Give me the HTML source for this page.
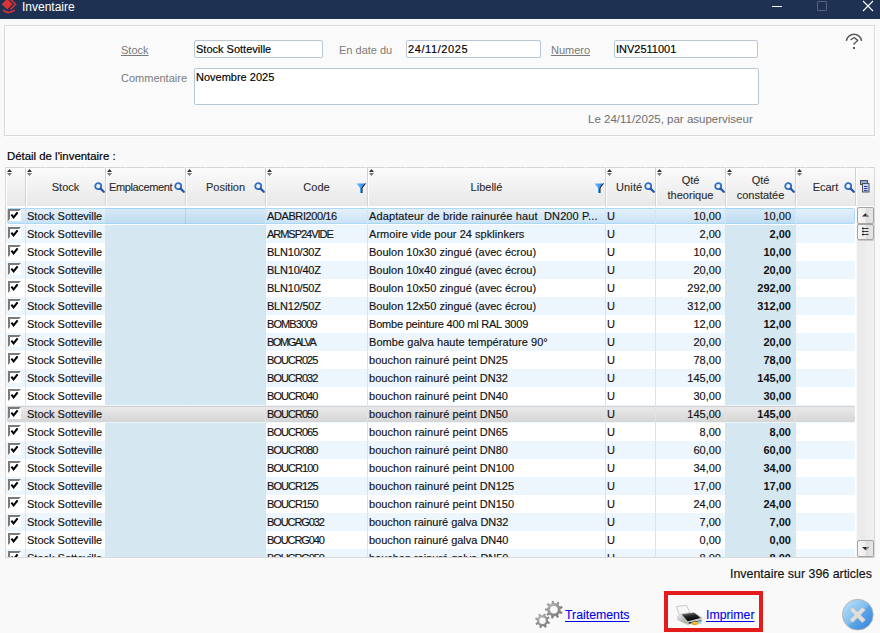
<!DOCTYPE html><html><head><meta charset="utf-8"><style>*{margin:0;padding:0;box-sizing:border-box}
html,body{width:880px;height:633px;overflow:hidden;background:#f9f9f9;font-family:"Liberation Sans",sans-serif;font-size:11px;position:relative}
.t{position:absolute;white-space:nowrap;line-height:13px}
.ic{position:absolute;display:block}
#title{position:absolute;left:0;top:0;width:880px;height:19px;background:#1f3152}
#panel{position:absolute;left:4px;top:25px;width:871px;height:111px;border:1px solid #d9d9d9;background:#fafafa;box-shadow:1px 1px 0 #fff,inset 1px 1px 0 #fff}
.lbl{color:#7a7a7a}
.u{text-decoration:underline;text-underline-offset:1px}
.inp{position:absolute;border:1px solid #b8c7d6;border-radius:2px;background:#fff}
.inp span{position:absolute;left:1px;top:2px;color:#000;line-height:13px;white-space:nowrap;-webkit-text-stroke:0.15px #000}
#tbl{position:absolute;left:5px;top:167px;width:870px;height:391px;border:1px solid #d9d9d9;background:#fff}
.hc{position:absolute;top:168px;height:38px;background:linear-gradient(#fbfbfb,#e8e8e8);border-right:1px solid #d2d2d2;box-shadow:inset 1px 0 0 #fff}
.hdt{text-align:center;color:#2a2a2a;-webkit-text-stroke:0.1px #2a2a2a}
#rows{position:absolute;left:6px;top:207px;width:849px;height:350px;overflow:hidden}
.row{position:absolute;left:0;width:849px;height:18px}
.row.even{background:#fff}
.row.odd{background:#eef6fd}
.row .bl{position:absolute;top:0;height:18px;background:#d5e8f2}
.row .sp{position:absolute;top:0;width:1px;height:18px;background:#e1e1e1}
.selbox{position:absolute;left:1px;top:1px;width:848px;height:16px;background:linear-gradient(#e4f0fa,#c9e2f5);border:1px solid #a9d9f5;border-radius:2px}
.row.first{background:transparent}
.hovbox{position:absolute;left:1px;top:1px;width:848px;height:16px;background:linear-gradient(#e9e9e9,#d5d5d5);border-top:1px solid #cfcfcf;border-radius:2px}
.cb{position:absolute;left:2px;top:2px;width:13px;height:12px;background:#fff}
.cb svg{display:block}
.c{top:3px;color:#111;-webkit-text-stroke:0.15px #111}
.r{text-align:right}
.b{font-weight:bold;-webkit-text-stroke:0 #111}
#sbar{position:absolute;left:856px;top:207px;width:18px;height:350px;background:linear-gradient(90deg,#f9f9f9 0,#f9f9f9 1px,#ebebeb 1px,#ebebeb 10px,#efefef 10px)}
.sbtn{position:absolute;left:857px;width:17px;border:1px solid #a4a4a4;border-radius:2px;background:linear-gradient(90deg,#f6f6f6 0%,#ececec 50%,#dcdcdc 54%,#e6e6e6 100%);box-shadow:0 1px 0 #c8c8c8}
.sbtn svg{position:absolute;left:-1px;top:-1px}
.lnk{color:#0000f0;text-decoration:underline;text-underline-offset:2px;text-decoration-skip-ink:none;font-size:12.3px;-webkit-text-stroke:0.1px #0000f0}
#redbox{position:absolute;left:664px;top:591px;width:99px;height:41px;border:4px solid #e31b1b}
</style></head><body>
<div id="title"></div>
<svg class="ic" style="left:0px;top:0px" width="17" height="14" viewBox="0 0 17 14"><path d="M1.8 4.2 L7.2 -1.2 L12.4 4.2 L7.2 9.6 Z" fill="#e03236"/><path d="M10.8 -0.4 L15.6 4.2 L10.4 9.6" fill="none" stroke="#e03236" stroke-width="1.5"/><path d="M2.8 10.2 Q8.5 14.8 14.8 10.2" fill="none" stroke="#e03236" stroke-width="1.6"/></svg>
<div class="t" style="left:22px;top:0px;color:#fff;font-size:12px;line-height:14px">Inventaire</div>
<div style="position:absolute;left:772px;top:6px;width:10px;height:1px;background:#fff"></div>
<div style="position:absolute;left:817px;top:1px;width:10px;height:10px;border:1px solid #56647c;border-radius:1px"></div>
<svg class="ic" style="left:862px;top:0px" width="12" height="12" viewBox="0 0 12 12"><path d="M1 1 L11 11 M11 1 L1 11" stroke="#fff" stroke-width="1.1"/></svg>
<div id="panel"></div>
<div class="t lbl u" style="left:121px;top:44px">Stock</div>
<div class="inp" style="left:194px;top:40px;width:129px;height:18px"><span>Stock Sotteville</span></div>
<div class="t lbl" style="left:339px;top:44px">En date du</div>
<div class="inp" style="left:406px;top:40px;width:135px;height:18px"><span style="letter-spacing:0.6px">24/11/2025</span></div>
<div class="t lbl u" style="left:551px;top:44px">Numero</div>
<div class="inp" style="left:614px;top:40px;width:144px;height:18px"><span>INV2511001</span></div>
<div class="t lbl" style="left:121px;top:72px">Commentaire</div>
<div class="inp" style="left:194px;top:68px;width:565px;height:37px"><span>Novembre 2025</span></div>
<div class="t lbl" style="left:588px;top:113px;color:#6f6f6f;font-size:11.5px">Le 24/11/2025, par asuperviseur</div>
<svg class="ic" style="left:845px;top:32px" width="18" height="18" viewBox="0 0 18 18"><circle cx="9" cy="9.3" r="7.6" fill="#fff"/><path d="M1.4 8.8 A7.7 7.7 0 0 1 16.6 8.8" fill="none" stroke="#5a5a5a" stroke-width="1.5"/><path d="M5.4 8 L9.2 5.5 L12.7 8.4 L8.5 12.6" fill="none" stroke="#555" stroke-width="1.4"/><rect x="8" y="15" width="2" height="2" fill="#555"/></svg>
<div class="t" style="left:7px;top:150px;color:#000;font-size:11.4px;-webkit-text-stroke:0.2px #000">Détail de l'inventaire :</div>
<div id="tbl"></div>
<div style="position:absolute;left:6px;top:167px;width:868px;height:1px;background:repeating-linear-gradient(90deg,#d6d6d6 0,#d6d6d6 19px,#f4f4f4 19px,#f4f4f4 20px)"></div>
<div class="hc" style="left:6px;width:20px"></div>
<div class="hc" style="left:26px;width:80px"></div>
<div class="hc" style="left:106px;width:80px"></div>
<div class="hc" style="left:186px;width:80px"></div>
<div class="hc" style="left:266px;width:102px"></div>
<div class="hc" style="left:368px;width:238px"></div>
<div class="hc" style="left:606px;width:50px"></div>
<div class="hc" style="left:656px;width:70px"></div>
<div class="hc" style="left:726px;width:70px"></div>
<div class="hc" style="left:796px;width:60px"></div>
<div class="hc" style="left:856px;width:18px;border-right:none"></div>
<svg class="ic" style="left:7px;top:169px" width="5" height="8" viewBox="0 0 5 8"><path d="M0 3 L2.5 0 L5 3Z" fill="#333"/><path d="M0 4 L2.5 7 L5 4Z" fill="#777"/></svg>
<svg class="ic" style="left:27px;top:169px" width="5" height="8" viewBox="0 0 5 8"><path d="M0 3 L2.5 0 L5 3Z" fill="#333"/><path d="M0 4 L2.5 7 L5 4Z" fill="#777"/></svg>
<svg class="ic" style="left:107px;top:169px" width="5" height="8" viewBox="0 0 5 8"><path d="M0 3 L2.5 0 L5 3Z" fill="#333"/><path d="M0 4 L2.5 7 L5 4Z" fill="#777"/></svg>
<svg class="ic" style="left:187px;top:169px" width="5" height="8" viewBox="0 0 5 8"><path d="M0 3 L2.5 0 L5 3Z" fill="#333"/><path d="M0 4 L2.5 7 L5 4Z" fill="#777"/></svg>
<svg class="ic" style="left:267px;top:169px" width="5" height="8" viewBox="0 0 5 8"><path d="M0 3 L2.5 0 L5 3Z" fill="#333"/><path d="M0 4 L2.5 7 L5 4Z" fill="#777"/></svg>
<svg class="ic" style="left:369px;top:169px" width="5" height="8" viewBox="0 0 5 8"><path d="M0 3 L2.5 0 L5 3Z" fill="#333"/><path d="M0 4 L2.5 7 L5 4Z" fill="#777"/></svg>
<svg class="ic" style="left:607px;top:169px" width="5" height="8" viewBox="0 0 5 8"><path d="M0 3 L2.5 0 L5 3Z" fill="#333"/><path d="M0 4 L2.5 7 L5 4Z" fill="#777"/></svg>
<svg class="ic" style="left:657px;top:169px" width="5" height="8" viewBox="0 0 5 8"><path d="M0 3 L2.5 0 L5 3Z" fill="#333"/><path d="M0 4 L2.5 7 L5 4Z" fill="#777"/></svg>
<svg class="ic" style="left:727px;top:169px" width="5" height="8" viewBox="0 0 5 8"><path d="M0 3 L2.5 0 L5 3Z" fill="#333"/><path d="M0 4 L2.5 7 L5 4Z" fill="#777"/></svg>
<svg class="ic" style="left:797px;top:169px" width="5" height="8" viewBox="0 0 5 8"><path d="M0 3 L2.5 0 L5 3Z" fill="#333"/><path d="M0 4 L2.5 7 L5 4Z" fill="#777"/></svg>
<div class="t hdt" style="left:26px;width:79px;top:180px;line-height:15px">Stock</div>
<svg class="ic" style="left:94px;top:182px" width="11" height="11" viewBox="0 0 11 11"><circle cx="4.2" cy="4.2" r="3" fill="none" stroke="#2d6fc4" stroke-width="1.8"/><path d="M6.6 6.6 L9.8 9.8" stroke="#2456a8" stroke-width="2.2" stroke-linecap="round"/></svg>
<div class="t hdt" style="left:109px;text-align:left;top:180px;line-height:15px;letter-spacing:-0.370px;">Emplacement</div>
<svg class="ic" style="left:174px;top:182px" width="11" height="11" viewBox="0 0 11 11"><circle cx="4.2" cy="4.2" r="3" fill="none" stroke="#2d6fc4" stroke-width="1.8"/><path d="M6.6 6.6 L9.8 9.8" stroke="#2456a8" stroke-width="2.2" stroke-linecap="round"/></svg>
<div class="t hdt" style="left:186px;width:79px;top:180px;line-height:15px">Position</div>
<svg class="ic" style="left:254px;top:182px" width="11" height="11" viewBox="0 0 11 11"><circle cx="4.2" cy="4.2" r="3" fill="none" stroke="#2d6fc4" stroke-width="1.8"/><path d="M6.6 6.6 L9.8 9.8" stroke="#2456a8" stroke-width="2.2" stroke-linecap="round"/></svg>
<div class="t hdt" style="left:266px;width:101px;top:180px;line-height:15px">Code</div>
<svg class="ic" style="left:356px;top:183px" width="11" height="11" viewBox="0 0 11 11"><defs><linearGradient id="fg" x1="0" x2="1"><stop offset="0" stop-color="#6cc8ff"/><stop offset="1" stop-color="#1b6fe0"/></linearGradient></defs><path d="M0.5 0.5 H9.5 L6 5 V10 L4 10 V5 Z" fill="url(#fg)"/><path d="M9.5 0.5 L6 5 V10" fill="none" stroke="#111" stroke-width="1"/></svg>
<div class="t hdt" style="left:368px;width:237px;top:180px;line-height:15px">Libellé</div>
<svg class="ic" style="left:594px;top:183px" width="11" height="11" viewBox="0 0 11 11"><defs><linearGradient id="fg" x1="0" x2="1"><stop offset="0" stop-color="#6cc8ff"/><stop offset="1" stop-color="#1b6fe0"/></linearGradient></defs><path d="M0.5 0.5 H9.5 L6 5 V10 L4 10 V5 Z" fill="url(#fg)"/><path d="M9.5 0.5 L6 5 V10" fill="none" stroke="#111" stroke-width="1"/></svg>
<div class="t hdt" style="left:616px;text-align:left;top:180px;line-height:15px;letter-spacing:0.125px;">Unité</div>
<svg class="ic" style="left:644px;top:182px" width="11" height="11" viewBox="0 0 11 11"><circle cx="4.2" cy="4.2" r="3" fill="none" stroke="#2d6fc4" stroke-width="1.8"/><path d="M6.6 6.6 L9.8 9.8" stroke="#2456a8" stroke-width="2.2" stroke-linecap="round"/></svg>
<div class="t hdt" style="left:656px;width:69px;top:173px;line-height:15px">Qté<br>theorique</div>
<svg class="ic" style="left:714px;top:182px" width="11" height="11" viewBox="0 0 11 11"><circle cx="4.2" cy="4.2" r="3" fill="none" stroke="#2d6fc4" stroke-width="1.8"/><path d="M6.6 6.6 L9.8 9.8" stroke="#2456a8" stroke-width="2.2" stroke-linecap="round"/></svg>
<div class="t hdt" style="left:726px;width:69px;top:173px;line-height:15px">Qté<br>constatée</div>
<svg class="ic" style="left:784px;top:182px" width="11" height="11" viewBox="0 0 11 11"><circle cx="4.2" cy="4.2" r="3" fill="none" stroke="#2d6fc4" stroke-width="1.8"/><path d="M6.6 6.6 L9.8 9.8" stroke="#2456a8" stroke-width="2.2" stroke-linecap="round"/></svg>
<div class="t hdt" style="left:796px;width:59px;top:180px;line-height:15px">Ecart</div>
<svg class="ic" style="left:844px;top:182px" width="11" height="11" viewBox="0 0 11 11"><circle cx="4.2" cy="4.2" r="3" fill="none" stroke="#2d6fc4" stroke-width="1.8"/><path d="M6.6 6.6 L9.8 9.8" stroke="#2456a8" stroke-width="2.2" stroke-linecap="round"/></svg>
<div id="rows">
<div class="row even first" style="top:0px">
<div class="selbox"></div>
<div class="bl" style="left:99px;top:1px;height:16px;width:160px;background:rgba(120,180,220,0.12)"></div>
<div class="bl" style="left:719px;top:1px;height:16px;width:70px;background:rgba(120,180,220,0.12)"></div>
<div class="sp" style="left:179px;top:1px;height:16px;background:rgba(150,170,185,0.35)"></div>
<div class="sp" style="left:19px"></div>
<div class="sp" style="left:259px"></div>
<div class="sp" style="left:361px"></div>
<div class="sp" style="left:599px"></div>
<div class="sp" style="left:649px"></div>
<div class="sp" style="left:719px"></div>
<div class="sp" style="left:789px"></div>
<div class="cb"><svg width="13" height="12" viewBox="0 0 13 12"><path d="M0 0 H13 L11 2 H2 V10 L0 12 Z" fill="#7a7a7a"/><path d="M3.4 5.6 L5.6 8.4 L9.6 3.4" fill="none" stroke="#000" stroke-width="2.1"/></svg></div>
<div class="t c" style="left:21px">Stock Sotteville</div>
<div class="t c" style="left:261px;letter-spacing:-0.400px;">ADABRI200/16</div>
<div class="t c" style="left:363px;letter-spacing:0.125px;">Adaptateur de bride rainurée haut&nbsp; DN200 P...</div>
<div class="t c" style="left:601px">U</div>
<div class="t c r" style="left:646px;width:69px">10,00</div>
<div class="t c r" style="left:716px;width:69px">10,00</div>
</div>
<div class="row odd" style="top:18px">
<div class="bl" style="left:99px;width:160px"></div>
<div class="bl" style="left:719px;width:70px"></div>
<div class="sp" style="left:179px;background:#dde3e6"></div>
<div class="sp" style="left:19px"></div>
<div class="sp" style="left:259px"></div>
<div class="sp" style="left:361px"></div>
<div class="sp" style="left:599px"></div>
<div class="sp" style="left:649px"></div>
<div class="sp" style="left:719px"></div>
<div class="sp" style="left:789px"></div>
<div class="cb"><svg width="13" height="12" viewBox="0 0 13 12"><path d="M0 0 H13 L11 2 H2 V10 L0 12 Z" fill="#7a7a7a"/><path d="M3.4 5.6 L5.6 8.4 L9.6 3.4" fill="none" stroke="#000" stroke-width="2.1"/></svg></div>
<div class="t c" style="left:21px">Stock Sotteville</div>
<div class="t c" style="left:261px;letter-spacing:-1.030px;">ARMSP24VIDE</div>
<div class="t c" style="left:363px;letter-spacing:0.043px;">Armoire vide pour 24 spklinkers</div>
<div class="t c" style="left:601px">U</div>
<div class="t c r" style="left:646px;width:69px">2,00</div>
<div class="t c r b" style="left:716px;width:69px">2,00</div>
</div>
<div class="row even" style="top:36px">
<div class="bl" style="left:99px;width:160px"></div>
<div class="bl" style="left:719px;width:70px"></div>
<div class="sp" style="left:179px;background:#dde3e6"></div>
<div class="sp" style="left:19px"></div>
<div class="sp" style="left:259px"></div>
<div class="sp" style="left:361px"></div>
<div class="sp" style="left:599px"></div>
<div class="sp" style="left:649px"></div>
<div class="sp" style="left:719px"></div>
<div class="sp" style="left:789px"></div>
<div class="cb"><svg width="13" height="12" viewBox="0 0 13 12"><path d="M0 0 H13 L11 2 H2 V10 L0 12 Z" fill="#7a7a7a"/><path d="M3.4 5.6 L5.6 8.4 L9.6 3.4" fill="none" stroke="#000" stroke-width="2.1"/></svg></div>
<div class="t c" style="left:21px">Stock Sotteville</div>
<div class="t c" style="left:261px;letter-spacing:-0.213px;">BLN10/30Z</div>
<div class="t c" style="left:363px;letter-spacing:0.006px;">Boulon 10x30 zingué (avec écrou)</div>
<div class="t c" style="left:601px">U</div>
<div class="t c r" style="left:646px;width:69px">10,00</div>
<div class="t c r b" style="left:716px;width:69px">10,00</div>
</div>
<div class="row odd" style="top:54px">
<div class="bl" style="left:99px;width:160px"></div>
<div class="bl" style="left:719px;width:70px"></div>
<div class="sp" style="left:179px;background:#dde3e6"></div>
<div class="sp" style="left:19px"></div>
<div class="sp" style="left:259px"></div>
<div class="sp" style="left:361px"></div>
<div class="sp" style="left:599px"></div>
<div class="sp" style="left:649px"></div>
<div class="sp" style="left:719px"></div>
<div class="sp" style="left:789px"></div>
<div class="cb"><svg width="13" height="12" viewBox="0 0 13 12"><path d="M0 0 H13 L11 2 H2 V10 L0 12 Z" fill="#7a7a7a"/><path d="M3.4 5.6 L5.6 8.4 L9.6 3.4" fill="none" stroke="#000" stroke-width="2.1"/></svg></div>
<div class="t c" style="left:21px">Stock Sotteville</div>
<div class="t c" style="left:261px;letter-spacing:-0.213px;">BLN10/40Z</div>
<div class="t c" style="left:363px;letter-spacing:0.006px;">Boulon 10x40 zingué (avec écrou)</div>
<div class="t c" style="left:601px">U</div>
<div class="t c r" style="left:646px;width:69px">20,00</div>
<div class="t c r b" style="left:716px;width:69px">20,00</div>
</div>
<div class="row even" style="top:72px">
<div class="bl" style="left:99px;width:160px"></div>
<div class="bl" style="left:719px;width:70px"></div>
<div class="sp" style="left:179px;background:#dde3e6"></div>
<div class="sp" style="left:19px"></div>
<div class="sp" style="left:259px"></div>
<div class="sp" style="left:361px"></div>
<div class="sp" style="left:599px"></div>
<div class="sp" style="left:649px"></div>
<div class="sp" style="left:719px"></div>
<div class="sp" style="left:789px"></div>
<div class="cb"><svg width="13" height="12" viewBox="0 0 13 12"><path d="M0 0 H13 L11 2 H2 V10 L0 12 Z" fill="#7a7a7a"/><path d="M3.4 5.6 L5.6 8.4 L9.6 3.4" fill="none" stroke="#000" stroke-width="2.1"/></svg></div>
<div class="t c" style="left:21px">Stock Sotteville</div>
<div class="t c" style="left:261px;letter-spacing:-0.213px;">BLN10/50Z</div>
<div class="t c" style="left:363px;letter-spacing:0.006px;">Boulon 10x50 zingué (avec écrou)</div>
<div class="t c" style="left:601px">U</div>
<div class="t c r" style="left:646px;width:69px">292,00</div>
<div class="t c r b" style="left:716px;width:69px">292,00</div>
</div>
<div class="row odd" style="top:90px">
<div class="bl" style="left:99px;width:160px"></div>
<div class="bl" style="left:719px;width:70px"></div>
<div class="sp" style="left:179px;background:#dde3e6"></div>
<div class="sp" style="left:19px"></div>
<div class="sp" style="left:259px"></div>
<div class="sp" style="left:361px"></div>
<div class="sp" style="left:599px"></div>
<div class="sp" style="left:649px"></div>
<div class="sp" style="left:719px"></div>
<div class="sp" style="left:789px"></div>
<div class="cb"><svg width="13" height="12" viewBox="0 0 13 12"><path d="M0 0 H13 L11 2 H2 V10 L0 12 Z" fill="#7a7a7a"/><path d="M3.4 5.6 L5.6 8.4 L9.6 3.4" fill="none" stroke="#000" stroke-width="2.1"/></svg></div>
<div class="t c" style="left:21px">Stock Sotteville</div>
<div class="t c" style="left:261px;letter-spacing:-0.213px;">BLN12/50Z</div>
<div class="t c" style="left:363px;letter-spacing:0.006px;">Boulon 12x50 zingué (avec écrou)</div>
<div class="t c" style="left:601px">U</div>
<div class="t c r" style="left:646px;width:69px">312,00</div>
<div class="t c r b" style="left:716px;width:69px">312,00</div>
</div>
<div class="row even" style="top:108px">
<div class="bl" style="left:99px;width:160px"></div>
<div class="bl" style="left:719px;width:70px"></div>
<div class="sp" style="left:179px;background:#dde3e6"></div>
<div class="sp" style="left:19px"></div>
<div class="sp" style="left:259px"></div>
<div class="sp" style="left:361px"></div>
<div class="sp" style="left:599px"></div>
<div class="sp" style="left:649px"></div>
<div class="sp" style="left:719px"></div>
<div class="sp" style="left:789px"></div>
<div class="cb"><svg width="13" height="12" viewBox="0 0 13 12"><path d="M0 0 H13 L11 2 H2 V10 L0 12 Z" fill="#7a7a7a"/><path d="M3.4 5.6 L5.6 8.4 L9.6 3.4" fill="none" stroke="#000" stroke-width="2.1"/></svg></div>
<div class="t c" style="left:21px">Stock Sotteville</div>
<div class="t c" style="left:261px;letter-spacing:-0.900px;">BOMB3009</div>
<div class="t c" style="left:363px;letter-spacing:-0.207px;">Bombe peinture 400 ml RAL 3009</div>
<div class="t c" style="left:601px">U</div>
<div class="t c r" style="left:646px;width:69px">12,00</div>
<div class="t c r b" style="left:716px;width:69px">12,00</div>
</div>
<div class="row odd" style="top:126px">
<div class="bl" style="left:99px;width:160px"></div>
<div class="bl" style="left:719px;width:70px"></div>
<div class="sp" style="left:179px;background:#dde3e6"></div>
<div class="sp" style="left:19px"></div>
<div class="sp" style="left:259px"></div>
<div class="sp" style="left:361px"></div>
<div class="sp" style="left:599px"></div>
<div class="sp" style="left:649px"></div>
<div class="sp" style="left:719px"></div>
<div class="sp" style="left:789px"></div>
<div class="cb"><svg width="13" height="12" viewBox="0 0 13 12"><path d="M0 0 H13 L11 2 H2 V10 L0 12 Z" fill="#7a7a7a"/><path d="M3.4 5.6 L5.6 8.4 L9.6 3.4" fill="none" stroke="#000" stroke-width="2.1"/></svg></div>
<div class="t c" style="left:21px">Stock Sotteville</div>
<div class="t c" style="left:261px;letter-spacing:-1.471px;">BOMGALVA</div>
<div class="t c" style="left:363px;letter-spacing:0.059px;">Bombe galva haute température 90°</div>
<div class="t c" style="left:601px">U</div>
<div class="t c r" style="left:646px;width:69px">20,00</div>
<div class="t c r b" style="left:716px;width:69px">20,00</div>
</div>
<div class="row even" style="top:144px">
<div class="bl" style="left:99px;width:160px"></div>
<div class="bl" style="left:719px;width:70px"></div>
<div class="sp" style="left:179px;background:#dde3e6"></div>
<div class="sp" style="left:19px"></div>
<div class="sp" style="left:259px"></div>
<div class="sp" style="left:361px"></div>
<div class="sp" style="left:599px"></div>
<div class="sp" style="left:649px"></div>
<div class="sp" style="left:719px"></div>
<div class="sp" style="left:789px"></div>
<div class="cb"><svg width="13" height="12" viewBox="0 0 13 12"><path d="M0 0 H13 L11 2 H2 V10 L0 12 Z" fill="#7a7a7a"/><path d="M3.4 5.6 L5.6 8.4 L9.6 3.4" fill="none" stroke="#000" stroke-width="2.1"/></svg></div>
<div class="t c" style="left:21px">Stock Sotteville</div>
<div class="t c" style="left:261px;letter-spacing:-0.957px;">BOUCR025</div>
<div class="t c" style="left:363px;letter-spacing:0.056px;">bouchon rainuré peint DN25</div>
<div class="t c" style="left:601px">U</div>
<div class="t c r" style="left:646px;width:69px">78,00</div>
<div class="t c r b" style="left:716px;width:69px">78,00</div>
</div>
<div class="row odd" style="top:162px">
<div class="bl" style="left:99px;width:160px"></div>
<div class="bl" style="left:719px;width:70px"></div>
<div class="sp" style="left:179px;background:#dde3e6"></div>
<div class="sp" style="left:19px"></div>
<div class="sp" style="left:259px"></div>
<div class="sp" style="left:361px"></div>
<div class="sp" style="left:599px"></div>
<div class="sp" style="left:649px"></div>
<div class="sp" style="left:719px"></div>
<div class="sp" style="left:789px"></div>
<div class="cb"><svg width="13" height="12" viewBox="0 0 13 12"><path d="M0 0 H13 L11 2 H2 V10 L0 12 Z" fill="#7a7a7a"/><path d="M3.4 5.6 L5.6 8.4 L9.6 3.4" fill="none" stroke="#000" stroke-width="2.1"/></svg></div>
<div class="t c" style="left:21px">Stock Sotteville</div>
<div class="t c" style="left:261px;letter-spacing:-0.957px;">BOUCR032</div>
<div class="t c" style="left:363px;letter-spacing:0.056px;">bouchon rainuré peint DN32</div>
<div class="t c" style="left:601px">U</div>
<div class="t c r" style="left:646px;width:69px">145,00</div>
<div class="t c r b" style="left:716px;width:69px">145,00</div>
</div>
<div class="row even" style="top:180px">
<div class="bl" style="left:99px;width:160px"></div>
<div class="bl" style="left:719px;width:70px"></div>
<div class="sp" style="left:179px;background:#dde3e6"></div>
<div class="sp" style="left:19px"></div>
<div class="sp" style="left:259px"></div>
<div class="sp" style="left:361px"></div>
<div class="sp" style="left:599px"></div>
<div class="sp" style="left:649px"></div>
<div class="sp" style="left:719px"></div>
<div class="sp" style="left:789px"></div>
<div class="cb"><svg width="13" height="12" viewBox="0 0 13 12"><path d="M0 0 H13 L11 2 H2 V10 L0 12 Z" fill="#7a7a7a"/><path d="M3.4 5.6 L5.6 8.4 L9.6 3.4" fill="none" stroke="#000" stroke-width="2.1"/></svg></div>
<div class="t c" style="left:21px">Stock Sotteville</div>
<div class="t c" style="left:261px;letter-spacing:-0.957px;">BOUCR040</div>
<div class="t c" style="left:363px;letter-spacing:0.056px;">bouchon rainuré peint DN40</div>
<div class="t c" style="left:601px">U</div>
<div class="t c r" style="left:646px;width:69px">30,00</div>
<div class="t c r b" style="left:716px;width:69px">30,00</div>
</div>
<div class="row odd" style="top:198px">
<div class="hovbox"></div>
<div class="sp" style="left:19px"></div>
<div class="sp" style="left:259px"></div>
<div class="sp" style="left:361px"></div>
<div class="sp" style="left:599px"></div>
<div class="sp" style="left:649px"></div>
<div class="sp" style="left:719px"></div>
<div class="sp" style="left:789px"></div>
<div class="cb"><svg width="13" height="12" viewBox="0 0 13 12"><path d="M0 0 H13 L11 2 H2 V10 L0 12 Z" fill="#7a7a7a"/><path d="M3.4 5.6 L5.6 8.4 L9.6 3.4" fill="none" stroke="#000" stroke-width="2.1"/></svg></div>
<div class="t c" style="left:21px">Stock Sotteville</div>
<div class="t c" style="left:261px;letter-spacing:-0.957px;">BOUCR050</div>
<div class="t c" style="left:363px;letter-spacing:0.056px;">bouchon rainuré peint DN50</div>
<div class="t c" style="left:601px">U</div>
<div class="t c r" style="left:646px;width:69px">145,00</div>
<div class="t c r b" style="left:716px;width:69px">145,00</div>
</div>
<div class="row even" style="top:216px">
<div class="bl" style="left:99px;width:160px"></div>
<div class="bl" style="left:719px;width:70px"></div>
<div class="sp" style="left:179px;background:#dde3e6"></div>
<div class="sp" style="left:19px"></div>
<div class="sp" style="left:259px"></div>
<div class="sp" style="left:361px"></div>
<div class="sp" style="left:599px"></div>
<div class="sp" style="left:649px"></div>
<div class="sp" style="left:719px"></div>
<div class="sp" style="left:789px"></div>
<div class="cb"><svg width="13" height="12" viewBox="0 0 13 12"><path d="M0 0 H13 L11 2 H2 V10 L0 12 Z" fill="#7a7a7a"/><path d="M3.4 5.6 L5.6 8.4 L9.6 3.4" fill="none" stroke="#000" stroke-width="2.1"/></svg></div>
<div class="t c" style="left:21px">Stock Sotteville</div>
<div class="t c" style="left:261px;letter-spacing:-0.957px;">BOUCR065</div>
<div class="t c" style="left:363px;letter-spacing:0.056px;">bouchon rainuré peint DN65</div>
<div class="t c" style="left:601px">U</div>
<div class="t c r" style="left:646px;width:69px">8,00</div>
<div class="t c r b" style="left:716px;width:69px">8,00</div>
</div>
<div class="row odd" style="top:234px">
<div class="bl" style="left:99px;width:160px"></div>
<div class="bl" style="left:719px;width:70px"></div>
<div class="sp" style="left:179px;background:#dde3e6"></div>
<div class="sp" style="left:19px"></div>
<div class="sp" style="left:259px"></div>
<div class="sp" style="left:361px"></div>
<div class="sp" style="left:599px"></div>
<div class="sp" style="left:649px"></div>
<div class="sp" style="left:719px"></div>
<div class="sp" style="left:789px"></div>
<div class="cb"><svg width="13" height="12" viewBox="0 0 13 12"><path d="M0 0 H13 L11 2 H2 V10 L0 12 Z" fill="#7a7a7a"/><path d="M3.4 5.6 L5.6 8.4 L9.6 3.4" fill="none" stroke="#000" stroke-width="2.1"/></svg></div>
<div class="t c" style="left:21px">Stock Sotteville</div>
<div class="t c" style="left:261px;letter-spacing:-0.957px;">BOUCR080</div>
<div class="t c" style="left:363px;letter-spacing:0.056px;">bouchon rainuré peint DN80</div>
<div class="t c" style="left:601px">U</div>
<div class="t c r" style="left:646px;width:69px">60,00</div>
<div class="t c r b" style="left:716px;width:69px">60,00</div>
</div>
<div class="row even" style="top:252px">
<div class="bl" style="left:99px;width:160px"></div>
<div class="bl" style="left:719px;width:70px"></div>
<div class="sp" style="left:179px;background:#dde3e6"></div>
<div class="sp" style="left:19px"></div>
<div class="sp" style="left:259px"></div>
<div class="sp" style="left:361px"></div>
<div class="sp" style="left:599px"></div>
<div class="sp" style="left:649px"></div>
<div class="sp" style="left:719px"></div>
<div class="sp" style="left:789px"></div>
<div class="cb"><svg width="13" height="12" viewBox="0 0 13 12"><path d="M0 0 H13 L11 2 H2 V10 L0 12 Z" fill="#7a7a7a"/><path d="M3.4 5.6 L5.6 8.4 L9.6 3.4" fill="none" stroke="#000" stroke-width="2.1"/></svg></div>
<div class="t c" style="left:21px">Stock Sotteville</div>
<div class="t c" style="left:261px;letter-spacing:-0.929px;">BOUCR100</div>
<div class="t c" style="left:363px;letter-spacing:0.054px;">bouchon rainuré peint DN100</div>
<div class="t c" style="left:601px">U</div>
<div class="t c r" style="left:646px;width:69px">34,00</div>
<div class="t c r b" style="left:716px;width:69px">34,00</div>
</div>
<div class="row odd" style="top:270px">
<div class="bl" style="left:99px;width:160px"></div>
<div class="bl" style="left:719px;width:70px"></div>
<div class="sp" style="left:179px;background:#dde3e6"></div>
<div class="sp" style="left:19px"></div>
<div class="sp" style="left:259px"></div>
<div class="sp" style="left:361px"></div>
<div class="sp" style="left:599px"></div>
<div class="sp" style="left:649px"></div>
<div class="sp" style="left:719px"></div>
<div class="sp" style="left:789px"></div>
<div class="cb"><svg width="13" height="12" viewBox="0 0 13 12"><path d="M0 0 H13 L11 2 H2 V10 L0 12 Z" fill="#7a7a7a"/><path d="M3.4 5.6 L5.6 8.4 L9.6 3.4" fill="none" stroke="#000" stroke-width="2.1"/></svg></div>
<div class="t c" style="left:21px">Stock Sotteville</div>
<div class="t c" style="left:261px;letter-spacing:-0.929px;">BOUCR125</div>
<div class="t c" style="left:363px;letter-spacing:0.054px;">bouchon rainuré peint DN125</div>
<div class="t c" style="left:601px">U</div>
<div class="t c r" style="left:646px;width:69px">17,00</div>
<div class="t c r b" style="left:716px;width:69px">17,00</div>
</div>
<div class="row even" style="top:288px">
<div class="bl" style="left:99px;width:160px"></div>
<div class="bl" style="left:719px;width:70px"></div>
<div class="sp" style="left:179px;background:#dde3e6"></div>
<div class="sp" style="left:19px"></div>
<div class="sp" style="left:259px"></div>
<div class="sp" style="left:361px"></div>
<div class="sp" style="left:599px"></div>
<div class="sp" style="left:649px"></div>
<div class="sp" style="left:719px"></div>
<div class="sp" style="left:789px"></div>
<div class="cb"><svg width="13" height="12" viewBox="0 0 13 12"><path d="M0 0 H13 L11 2 H2 V10 L0 12 Z" fill="#7a7a7a"/><path d="M3.4 5.6 L5.6 8.4 L9.6 3.4" fill="none" stroke="#000" stroke-width="2.1"/></svg></div>
<div class="t c" style="left:21px">Stock Sotteville</div>
<div class="t c" style="left:261px;letter-spacing:-0.929px;">BOUCR150</div>
<div class="t c" style="left:363px;letter-spacing:0.054px;">bouchon rainuré peint DN150</div>
<div class="t c" style="left:601px">U</div>
<div class="t c r" style="left:646px;width:69px">24,00</div>
<div class="t c r b" style="left:716px;width:69px">24,00</div>
</div>
<div class="row odd" style="top:306px">
<div class="bl" style="left:99px;width:160px"></div>
<div class="bl" style="left:719px;width:70px"></div>
<div class="sp" style="left:179px;background:#dde3e6"></div>
<div class="sp" style="left:19px"></div>
<div class="sp" style="left:259px"></div>
<div class="sp" style="left:361px"></div>
<div class="sp" style="left:599px"></div>
<div class="sp" style="left:649px"></div>
<div class="sp" style="left:719px"></div>
<div class="sp" style="left:789px"></div>
<div class="cb"><svg width="13" height="12" viewBox="0 0 13 12"><path d="M0 0 H13 L11 2 H2 V10 L0 12 Z" fill="#7a7a7a"/><path d="M3.4 5.6 L5.6 8.4 L9.6 3.4" fill="none" stroke="#000" stroke-width="2.1"/></svg></div>
<div class="t c" style="left:21px">Stock Sotteville</div>
<div class="t c" style="left:261px;letter-spacing:-1.100px;">BOUCRG032</div>
<div class="t c" style="left:363px;letter-spacing:-0.024px;">bouchon rainuré galva DN32</div>
<div class="t c" style="left:601px">U</div>
<div class="t c r" style="left:646px;width:69px">7,00</div>
<div class="t c r b" style="left:716px;width:69px">7,00</div>
</div>
<div class="row even" style="top:324px">
<div class="bl" style="left:99px;width:160px"></div>
<div class="bl" style="left:719px;width:70px"></div>
<div class="sp" style="left:179px;background:#dde3e6"></div>
<div class="sp" style="left:19px"></div>
<div class="sp" style="left:259px"></div>
<div class="sp" style="left:361px"></div>
<div class="sp" style="left:599px"></div>
<div class="sp" style="left:649px"></div>
<div class="sp" style="left:719px"></div>
<div class="sp" style="left:789px"></div>
<div class="cb"><svg width="13" height="12" viewBox="0 0 13 12"><path d="M0 0 H13 L11 2 H2 V10 L0 12 Z" fill="#7a7a7a"/><path d="M3.4 5.6 L5.6 8.4 L9.6 3.4" fill="none" stroke="#000" stroke-width="2.1"/></svg></div>
<div class="t c" style="left:21px">Stock Sotteville</div>
<div class="t c" style="left:261px;letter-spacing:-1.100px;">BOUCRG040</div>
<div class="t c" style="left:363px;letter-spacing:-0.024px;">bouchon rainuré galva DN40</div>
<div class="t c" style="left:601px">U</div>
<div class="t c r" style="left:646px;width:69px">0,00</div>
<div class="t c r b" style="left:716px;width:69px">0,00</div>
</div>
<div class="row odd" style="top:342px">
<div class="bl" style="left:99px;width:160px"></div>
<div class="bl" style="left:719px;width:70px"></div>
<div class="sp" style="left:179px;background:#dde3e6"></div>
<div class="sp" style="left:19px"></div>
<div class="sp" style="left:259px"></div>
<div class="sp" style="left:361px"></div>
<div class="sp" style="left:599px"></div>
<div class="sp" style="left:649px"></div>
<div class="sp" style="left:719px"></div>
<div class="sp" style="left:789px"></div>
<div class="cb"><svg width="13" height="12" viewBox="0 0 13 12"><path d="M0 0 H13 L11 2 H2 V10 L0 12 Z" fill="#7a7a7a"/><path d="M3.4 5.6 L5.6 8.4 L9.6 3.4" fill="none" stroke="#000" stroke-width="2.1"/></svg></div>
<div class="t c" style="left:21px">Stock Sotteville</div>
<div class="t c" style="left:261px;letter-spacing:-1.100px;">BOUCRG050</div>
<div class="t c" style="left:363px;letter-spacing:-0.024px;">bouchon rainuré galva DN50</div>
<div class="t c" style="left:601px">U</div>
<div class="t c r" style="left:646px;width:69px">8,00</div>
<div class="t c r b" style="left:716px;width:69px">8,00</div>
</div>
</div>
<div id="sbar"></div>
<div class="sbtn" style="top:207px;height:17px"><svg width="17" height="17" viewBox="0 0 17 17"><path d="M5 9.5 L8.5 6.2 L12 9.5Z" fill="#2a2a2a"/><path d="M8.5 6.2 L12 9.5 H9.5Z" fill="#888"/></svg></div>
<div class="sbtn" style="top:224px;height:16px"><svg width="17" height="16" viewBox="0 0 17 16"><path d="M5 4.5h6.5M5 7.5h6.5M5 10.5h6.5" stroke="#3a3a3a" stroke-width="1.1"/><path d="M5 4.5h2M5 7.5h2M5 10.5h2" stroke="#222" stroke-width="1.5"/></svg></div>
<div class="sbtn" style="top:540px;height:17px"><svg width="17" height="17" viewBox="0 0 17 17"><path d="M5 7 L8.5 10.3 L12 7Z" fill="#2a2a2a"/><path d="M8.5 10.3 L12 7 H9.5Z" fill="#888"/></svg></div>
<svg class="ic" style="left:860px;top:180px" width="10" height="13" viewBox="0 0 10 13"><rect x="0.5" y="0.5" width="7" height="4" fill="#8fa8f2" stroke="#505050"/><rect x="2.5" y="3.5" width="6.5" height="8.5" fill="#c3d3ff" stroke="#505050"/><path d="M4 6.5h3.5M4 8.5h3.5M4 10.5h3.5" stroke="#3b3ba8"/></svg>
<div class="t" style="left:730px;top:568px;font-size:12.4px;color:#111;-webkit-text-stroke:0.15px #111">Inventaire sur 396 articles</div>
<svg class="ic" style="left:530px;top:596px" width="40" height="36" viewBox="0 0 40 36"><defs><radialGradient id="gg" cx="0.4" cy="0.35" r="0.7"><stop offset="0" stop-color="#bdbdbd"/><stop offset="1" stop-color="#6e6e6e"/></radialGradient></defs><path d="M30.47 15.03 L32.44 16.19 L31.74 17.91 L29.52 17.35 L28.07 18.94 L28.84 21.10 L27.20 21.97 L25.85 20.11 L23.73 20.40 L22.93 22.55 L21.11 22.15 L21.28 19.86 L19.46 18.72 L17.47 19.85 L16.33 18.38 L17.93 16.74 L17.27 14.70 L15.02 14.28 L15.09 12.42 L17.37 12.19 L18.18 10.20 L16.72 8.44 L17.97 7.06 L19.87 8.34 L21.77 7.35 L21.79 5.05 L23.63 4.80 L24.26 7.01 L26.35 7.46 L27.84 5.72 L29.41 6.71 L28.47 8.80 L29.79 10.50 L32.05 10.12 L32.61 11.89 L30.55 12.89Z M27.70 13.70 A3.8 3.8 0 1 0 20.10 13.70 A3.8 3.8 0 1 0 27.70 13.70Z" fill="url(#gg)" fill-rule="evenodd"/><path d="M18.07 25.31 L19.86 26.20 L19.32 27.88 L17.35 27.55 L16.04 29.09 L16.68 30.98 L15.11 31.78 L13.95 30.16 L11.94 30.32 L11.05 32.11 L9.37 31.57 L9.70 29.60 L8.16 28.29 L6.27 28.93 L5.47 27.36 L7.09 26.20 L6.93 24.19 L5.14 23.30 L5.68 21.62 L7.65 21.95 L8.96 20.41 L8.32 18.52 L9.89 17.72 L11.05 19.34 L13.06 19.18 L13.95 17.39 L15.63 17.93 L15.30 19.90 L16.84 21.21 L18.73 20.57 L19.53 22.14 L17.91 23.30Z M15.70 24.75 A3.2 3.2 0 1 0 9.30 24.75 A3.2 3.2 0 1 0 15.70 24.75Z" fill="url(#gg)" fill-rule="evenodd"/></svg>
<div class="t lnk" style="left:565px;top:609px">Traitements</div>
<div id="redbox"></div>
<svg class="ic" style="left:672px;top:600px" width="34" height="28" viewBox="0 0 34 28"><defs><linearGradient id="pb" x1="0" y1="0" x2="0.3" y2="1"><stop offset="0" stop-color="#9a9a9a"/><stop offset="0.45" stop-color="#2a2a2a"/><stop offset="1" stop-color="#000"/></linearGradient><linearGradient id="ps" x1="0" y1="0" x2="1" y2="1"><stop offset="0" stop-color="#f0f0f0"/><stop offset="0.5" stop-color="#b4b4b4"/><stop offset="1" stop-color="#e8e8e8"/></linearGradient><radialGradient id="py" cx="0.5" cy="0.3" r="0.7"><stop offset="0" stop-color="#ffd84a"/><stop offset="1" stop-color="#e08a00"/></radialGradient></defs><path d="M4.4 6.6 L14.6 5.3 L18 12.6 L7.2 14.6Z" fill="#f6f6f6" stroke="#c4c4c4" stroke-width="0.9"/><path d="M5 15.5 L9.5 14 L22 12.4 L30.5 17.6 L29.5 21.5 L15.5 25 L5 19.8Z" fill="url(#ps)"/><path d="M9.5 14.2 L22 12.6 L28.5 18 L15.8 21.2Z" fill="url(#pb)"/><path d="M16.5 22.6 L29.5 20.2 L29.3 21.3 L16.8 23.8Z" fill="#111"/><path d="M19 22.6 L27 21.2 Q27.5 24.5 22.5 25.3 Q19.5 25 19 22.6Z" fill="url(#py)"/><path d="M26.2 21.4 L30 20.6 L29 23.5 L26.5 24Z" fill="#7fd0f5"/><circle cx="15.2" cy="22" r="0.9" fill="#7ed957"/></svg>
<div class="t lnk" style="left:706px;top:609px">Imprimer</div>
<svg class="ic" style="left:841px;top:598px" width="34" height="34" viewBox="0 0 34 34"><defs><linearGradient id="cg" x1="0" y1="0" x2="1" y2="1"><stop offset="0" stop-color="#c6e4fb"/><stop offset="0.5" stop-color="#7cbdf0"/><stop offset="0.55" stop-color="#5aa6ea"/><stop offset="1" stop-color="#2f7fdc"/></linearGradient></defs><circle cx="16.8" cy="16.7" r="15.4" fill="url(#cg)" stroke="#b9b3ad" stroke-width="0.9"/><path d="M9.9 10.3 L23.1 23.5 M23.1 10.3 L9.9 23.5" stroke="#9fb3c2" stroke-width="5" stroke-linecap="butt"/><path d="M10.2 10.6 L22.8 23.2 M22.8 10.6 L10.2 23.2" stroke="#dedede" stroke-width="4" stroke-linecap="butt"/></svg>
</body></html>
